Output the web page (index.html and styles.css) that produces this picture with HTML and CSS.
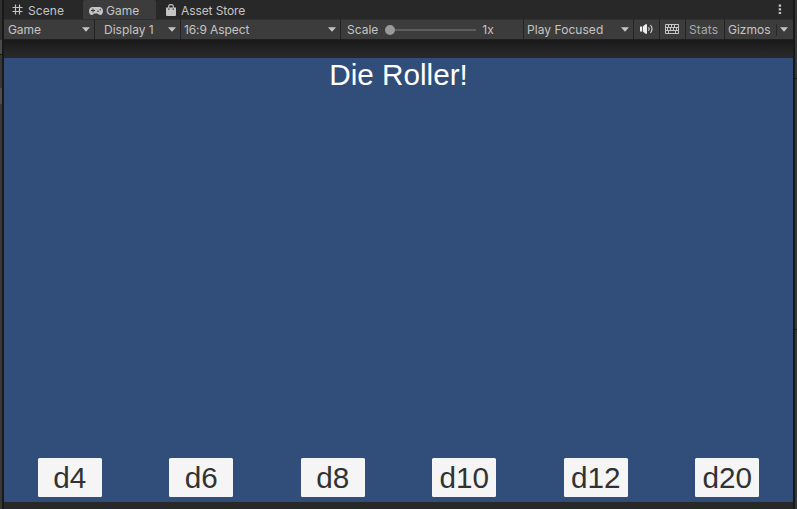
FILE: index.html
```html
<!DOCTYPE html>
<html lang="en">
<head>
<meta charset="utf-8">
<title>Game</title>
<link rel="stylesheet" href="styles.css">
</head>
<body>
<div class="editor">
  <div class="edge edge-left"><i></i><i></i><i></i><i></i></div>
  <main class="panel">
    <nav class="tabs">
      <div class="tab tab-scene">
        <svg width="11" height="11" viewBox="0 0 11 11" fill="none" stroke="currentColor" stroke-width="1.15"><path d="M3.500.500v10M7.500.500v10M.500 3.500h10M.500 7.500h10"/></svg>
        <span>Scene</span>
      </div>
      <div class="tab tab-game active">
        <svg width="14" height="8" viewBox="0 0 14 8"><path fill="currentColor" d="M3.500 0h7C12.700 0 14 1.800 14 4s-1 4-2.800 4C9.700 8 9.300 6.500 8.200 6.500H5.800C4.700 6.500 4.300 8 2.800 8 1 8 0 6.200 0 4s1.300-4 3.500-4z"/><path stroke="#3c3c3c" stroke-width="1" d="M2 3.500h4M4 1.500v4"/><circle cx="9" cy="4.300" r=".8" fill="#3c3c3c"/><circle cx="11.200" cy="2.700" r=".8" fill="#3c3c3c"/></svg>
        <span>Game</span>
      </div>
      <div class="tab tab-store">
        <svg width="10" height="12" viewBox="0 0 10 12"><path fill="none" stroke="currentColor" stroke-width="1.100" d="M2.700 4V2.300C2.700 0 7.300 0 7.300 2.300V4"/><path fill="currentColor" d="M0 3.500h10V11q0 1-1 1H1q-1 0-1-1z"/><path fill="#282828" d="M2.200 4.500h1.200v1.300H2.200zM6.600 4.500h1.200v1.300H6.600z"/></svg>
        <span>Asset Store</span>
      </div>
      <svg class="more" width="4" height="11" viewBox="0 0 4 11" fill="currentColor"><path d="M.7.500h2.400v2.200H.7zM.7 4.200h2.400v2.200H.7zM.7 7.900h2.400v2.200H.7z"/></svg>
    </nav>
    <div class="toolbar">
      <div class="cell cell-mode"><span>Game</span><b class="arrow"></b></div>
      <div class="cell cell-display"><span>Display 1</span><b class="arrow"></b></div>
      <div class="cell cell-aspect"><span>16:9 Aspect</span><b class="arrow"></b></div>
      <div class="cell cell-scale"><span>Scale</span><div class="slider"><i></i></div><span>1x</span></div>
      <div class="cell cell-play"><span>Play Focused</span><b class="arrow"></b></div>
      <div class="cell cell-audio">
        <svg width="13" height="10" viewBox="0 0 13 10"><path fill="#eee" d="M0 2.500h2v5H0zM2.800 2.500 5.500.300H7v9.400H5.500L2.800 7.500z"/><path fill="none" stroke="#d8d8d8" stroke-width="1.100" d="M8.500 3.200q1.300 1.800 0 3.600M10.500 1q3 4 0 8"/></svg>
      </div>
      <div class="cell cell-keys">
        <svg width="14" height="10" viewBox="0 0 14 10" fill="none" stroke="#c4c4c4"><path d="M.5.500h13v9H.5zM.5 3.500h13M.5 6.500h13M3.500.500v3M6.500.500v3M9.500.500v3M2.500 3.500v3M5.500 3.500v3M8.500 3.500v3M11.500 3.500v3M3.500 6.500v3M10.500 6.500v3"/></svg>
      </div>
      <div class="cell cell-stats"><span>Stats</span></div>
      <div class="cell cell-gizmos"><span>Gizmos</span><i class="split"></i><b class="arrow"></b></div>
    </div>
    <div class="shade"></div>
    <section class="view">
      <h1>Die Roller!</h1>
      <div class="dice">
        <button>d4</button><button>d6</button><button>d8</button><button>d10</button><button>d12</button><button>d20</button>
      </div>
    </section>
    <div class="foot"></div>
  </main>
  <div class="edge edge-right"><i></i><i></i><i></i></div>
</div>
</body>
</html>
```

FILE: styles.css
```css
* { box-sizing: border-box; }
body {
  margin: 0;
  background: #191919;
  color: #c4c4c4;
  font: 12px/15px Inter, sans-serif;
  overflow: hidden;
}
.editor { display: grid; grid-template-columns: 4px 789px 4px; height: 509px; }
.edge { display: flex; flex-direction: column; }
.edge i { width: 2px; background: #383838; }
.edge-left i:nth-child(1) { height: 40px; background: #303030; }
.edge-left i:nth-child(2) { height: 14px; margin-bottom: 1px; background: #4a4a4a; }
.edge-left i:nth-child(3) { height: 49px; background: linear-gradient(#383838 33px, #4d4d4d 33px); }
.edge-left i:nth-child(4) { flex: 1; }
.edge-right { align-items: flex-end; }
.edge-right i:nth-child(1) { height: 78px; margin-bottom: 1px; }
.edge-right i:nth-child(2) { height: 250px; margin-bottom: 1px; }
.edge-right i:nth-child(3) { flex: 1; }
.panel { display: grid; grid-template-rows: 19px 21px 18px 444px 7px; min-width: 0; }
.tabs { display: flex; background: #282828; }
.tab { display: flex; align-items: center; white-space: nowrap; padding-top: 2px; }
.tab svg { flex: none; }
.tab-scene { width: 79px; padding-left: 8px; gap: 5px; letter-spacing: 0.1px; }
.tab-scene svg { margin-top: -2px; }
.tab-game { width: 73px; padding-left: 6px; gap: 3px; border-radius: 2px 2px 0 0; background: #3c3c3c; }
.tab-store { padding-left: 10px; gap: 5px; letter-spacing: -0.1px; }
.tab-store svg { margin-top: -2px; }
.more { margin: 4px 11px 0 auto; }
.toolbar {
  display: flex;
  background: #3c3c3c;
  border-bottom: 1px solid #202020;
  box-shadow: inset 0 1px #303030;
}
.cell {
  display: flex;
  align-items: center;
  flex: none;
  padding: 1px 4px 0;
  border-right: 1px solid #232323;
  white-space: nowrap;
}
.arrow {
  width: 8px;
  height: 4.5px;
  margin-left: auto;
  background: #c4c4c4;
  clip-path: polygon(0 0, 100% 0, 50% 100%);
}
.cell-mode { width: 91px; letter-spacing: -0.1px; }
.cell-display { width: 86px; padding-left: 9px; }
.cell-aspect { width: 160px; padding-left: 3px; letter-spacing: -0.1px; }
.cell-scale { width: 183px; padding-left: 6px; }
.slider { width: 91px; height: 10px; margin: 1px 6px 0 7px; background: linear-gradient(#5e5e5e, #5e5e5e) 0 4px / 100% 2px no-repeat; }
.slider i { display: block; width: 10px; height: 10px; border-radius: 50%; background: #999; }
.cell-play { width: 110px; padding-left: 3px; letter-spacing: 0.05px; }
.cell-audio { width: 26px; padding: 0 0 1px 6px; }
.cell-keys { width: 26px; padding: 0 0 0 5px; }
.cell-stats { width: 39px; padding: 1px 0 0 3px; color: #a8a8a8; letter-spacing: 0.1px; }
.cell-gizmos { flex: 1; padding: 1px 5px 0 3px; border-right: 0; }
.split { width: 1px; height: 12px; margin-left: 5px; background: #282828; }
.shade { background: linear-gradient(#191919, #282828 14px); }
.view { display: flex; flex-direction: column; justify-content: space-between; background: #314d79; }
h1 { margin: 0; color: #fff; font: 29.7px/34px "Liberation Sans", sans-serif; text-align: center; }
.dice { display: grid; grid-template-columns: repeat(6, 1fr); justify-items: center; padding-bottom: 5px; }
button {
  width: 64px;
  height: 39.5px;
  padding: 1px 0 0;
  border: 0;
  border-radius: 1.5px;
  background: #f5f5f5;
  color: #323232;
  font: 29.7px/38px "Liberation Sans", sans-serif;
}
.foot { background: #282828; }
```
